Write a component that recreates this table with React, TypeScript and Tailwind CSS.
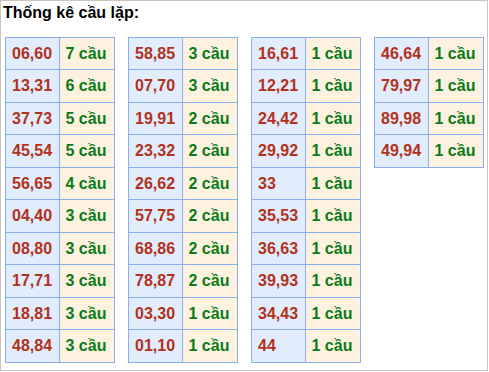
import React from "react";

type Row = [string, number];

const tables: Row[][] = [
  [["06,60", 7], ["13,31", 6], ["37,73", 5], ["45,54", 5], ["56,65", 4], ["04,40", 3], ["08,80", 3], ["17,71", 3], ["18,81", 3], ["48,84", 3]],
  [["58,85", 3], ["07,70", 3], ["19,91", 2], ["23,32", 2], ["26,62", 2], ["57,75", 2], ["68,86", 2], ["78,87", 2], ["03,30", 1], ["01,10", 1]],
  [["16,61", 1], ["12,21", 1], ["24,42", 1], ["29,92", 1], ["33", 1], ["35,53", 1], ["36,63", 1], ["39,93", 1], ["34,43", 1], ["44", 1]],
  [["46,64", 1], ["79,97", 1], ["89,98", 1], ["49,94", 1]],
];

function Table({ rows }: { rows: Row[] }) {
  return (
    <div className="w-[110px] border-l border-t border-[#8aaeee] flex flex-col">
      {rows.map(([pair, n], i) => (
        <div key={i} className={`flex ${i % 2 === 0 ? "h-[32px]" : "h-[33px]"}`}>
          <div className="w-[54px] bg-[#e1edfd] border-r border-b border-[#8aaeee] flex items-center pl-[6px] text-[#b3311b]">
            {pair}
          </div>
          <div className="w-[56px] bg-[#fdf2e0] border-r border-b border-[#8aaeee] flex items-center pl-[6px] text-[#0a7a1a]">
            {n} cầu
          </div>
        </div>
      ))}
    </div>
  );
}

export default function App() {
  return (
    <div
      className="w-[488px] h-[371px] border border-[#cdc5ba] bg-white"
      style={{ fontFamily: '"Liberation Sans", Arial, sans-serif' }}
    >
      <div className="pl-[2px] pt-[3px] text-[16px] leading-[18px] font-bold text-black">
        Thống kê cầu lặp:
      </div>
      <div className="ml-[4px] mt-[15px] flex items-start gap-[13px] text-[16px] leading-[18px] font-bold">
        {tables.map((t, i) => (
          <Table key={i} rows={t} />
        ))}
      </div>
    </div>
  );
}
